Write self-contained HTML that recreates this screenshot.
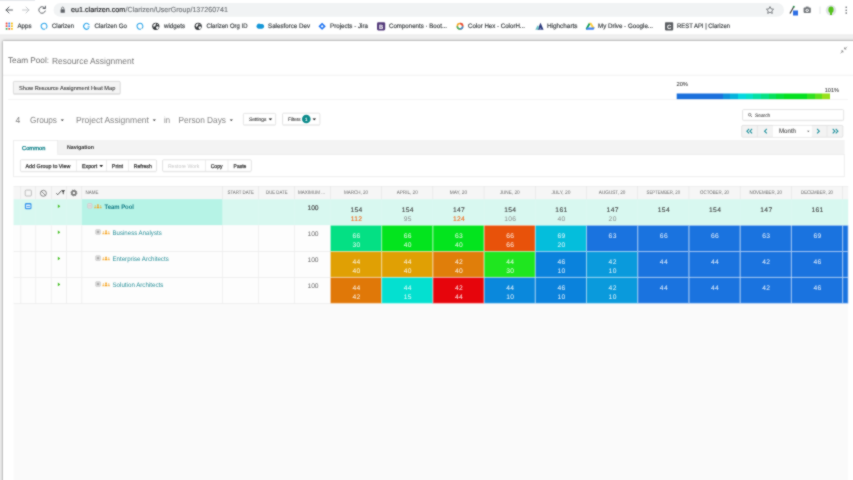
<!DOCTYPE html>
<html><head><meta charset="utf-8"><title>Team Pool: Resource Assignment</title>
<style>
html,body{margin:0;padding:0;width:853px;height:480px;overflow:hidden;background:#fff}
body{position:relative;filter:url(#soft);font-family:"Liberation Sans",sans-serif;text-rendering:geometricPrecision}
.b{position:absolute;display:block}
.tx{will-change:transform;font-family:"Liberation Sans",sans-serif;text-rendering:geometricPrecision}
.tx text{white-space:pre}
</style></head><body>
<svg width="0" height="0" style="position:absolute"><defs><filter id="soft" x="0" y="0" width="100%" height="100%" color-interpolation-filters="sRGB"><feConvolveMatrix order="3" kernelMatrix="1 2 1 2 12 2 1 2 1" divisor="24" edgeMode="duplicate" preserveAlpha="true"/></filter></defs></svg>
<div class="b" style="left:0px;top:0px;width:853px;height:35px;background:#fff"></div>
<div class="b" style="left:0px;top:35px;width:853px;height:445px;background:#efefef"></div>
<div class="b" style="left:3px;top:41px;width:857px;height:449px;background:#fff;box-shadow:0 0 1.2px rgba(0,0,0,.25),0 0 3px rgba(0,0,0,.38)"></div>
<svg class="b" style="left:0;top:0" width="853" height="480" viewBox="0 0 853 480">
<rect x="0.00" y="0.00" width="35.00" height="1.00" fill="#e6e8ec"/>
<rect x="53.50" y="3.00" width="730.50" height="13.80" fill="#f1f3f4" rx="7.00"/>
<svg x="0" y="0" width="853" height="40" viewBox="0 0 853 40"><g fill="none" stroke="#5f6368" stroke-width="1" stroke-linecap="round" stroke-linejoin="round"><path d="M12.5 10H6M9 7L6 10l3 3"/><path d="M22.5 10H29M26 7l3 3-3 3" stroke="#c4c7ca"/><path d="M45 8.3A3.3 3.3 0 1 0 45.3 11"/><path d="M45.4 6.2v2.3h-2.3" /></g><rect x="60.6" y="9.3" width="4.2" height="3.5" rx=".5" fill="#5f6368"/><path d="M61.6 9.3V8.2a1.1 1.1 0 0 1 2.2 0v1.1" fill="none" stroke="#5f6368" stroke-width=".8"/><path d="M770 6.6l1.1 2.3 2.5.3-1.8 1.7.5 2.5-2.3-1.2-2.3 1.2.5-2.5-1.8-1.7 2.5-.3z" fill="none" stroke="#5f6368" stroke-width=".8" stroke-linejoin="round"/><path d="M790 13.5l3.6-6.5" stroke="#444" stroke-width="1.3"/><rect x="793" y="10.5" width="5" height="5" fill="#2f6fe4"/><circle cx="793.8" cy="6.8" r="1" fill="#2a8f4a"/><rect x="803.6" y="7.6" width="7.2" height="5.4" rx="1" fill="#74787c"/><rect x="805.8" y="6.6" width="2.8" height="1.4" fill="#74787c"/><circle cx="807.2" cy="10.3" r="1.6" fill="#fff"/><circle cx="807.2" cy="10.3" r=".8" fill="#74787c"/><path d="M820 6.5v7.5" stroke="#dadce0" stroke-width=".7"/><circle cx="831" cy="10.3" r="5.2" fill="#dfe3e6"/><ellipse cx="831" cy="9.8" rx="2.6" ry="3.3" fill="#55c21c"/><rect x="830" y="12" width="2" height="3" fill="#55c21c"/><circle cx="846.2" cy="7.3" r=".8" fill="#5f6368"/><circle cx="846.2" cy="10.2" r=".8" fill="#5f6368"/><circle cx="846.2" cy="13.1" r=".8" fill="#5f6368"/><g><rect x="5.70" y="22.60" width="1.8" height="1.8" rx=".4" fill="#ea4335"/><rect x="8.35" y="22.60" width="1.8" height="1.8" rx=".4" fill="#4285f4"/><rect x="11.00" y="22.60" width="1.8" height="1.8" rx=".4" fill="#fbbc05"/><rect x="5.70" y="25.25" width="1.8" height="1.8" rx=".4" fill="#ea4335"/><rect x="8.35" y="25.25" width="1.8" height="1.8" rx=".4" fill="#4285f4"/><rect x="11.00" y="25.25" width="1.8" height="1.8" rx=".4" fill="#fbbc05"/><rect x="5.70" y="27.90" width="1.8" height="1.8" rx=".4" fill="#34a853"/><rect x="8.35" y="27.90" width="1.8" height="1.8" rx=".4" fill="#ea4335"/><rect x="11.00" y="27.90" width="1.8" height="1.8" rx=".4" fill="#fbbc05"/></g><circle cx="44.1" cy="26.3" r="2.9" fill="none" stroke="#2ea6ea" stroke-width="1.05" stroke-dasharray="16.4 1.82" transform="rotate(70 44.1 26.3)"/><circle cx="45.9" cy="28.4" r=".5" fill="#9aa"/><circle cx="86.6" cy="26.3" r="2.9" fill="none" stroke="#2ea6ea" stroke-width="1.05" stroke-dasharray="14.6 3.62" transform="rotate(40 86.6 26.3)"/><path d="M87.6 26.9h2.2" stroke="#2ea6ea" stroke-width="1"/><circle cx="140" cy="26.3" r="2.9" fill="none" stroke="#2ea6ea" stroke-width="1.05" stroke-dasharray="16.4 1.82" transform="rotate(70 140 26.3)"/><circle cx="141.8" cy="28.4" r=".5" fill="#9aa"/><circle cx="155.8" cy="26.3" r="3.6" fill="#35383b"/><path d="M153.20000000000002 25.1q1.2-1.6 2.6-1.9l.5 1-1 .8.3 1.1-1.3.4-.4 1.2z" fill="#fff"/><path d="M156.20000000000002 26.7l1.5-.5 1.1.9-.6 1.6-1.2.6-.9-1.2z" fill="#fff"/><path d="M157.0 23.7l1.2.9-.9.7z" fill="#fff"/><circle cx="198.2" cy="26.3" r="3.6" fill="#35383b"/><path d="M195.6 25.1q1.2-1.6 2.6-1.9l.5 1-1 .8.3 1.1-1.3.4-.4 1.2z" fill="#fff"/><path d="M198.6 26.7l1.5-.5 1.1.9-.6 1.6-1.2.6-.9-1.2z" fill="#fff"/><path d="M199.39999999999998 23.7l1.2.9-.9.7z" fill="#fff"/><ellipse cx="260.3" cy="26.4" rx="3.8" ry="2.3" fill="#1798d8"/><circle cx="259" cy="25.2" r="1.8" fill="#1798d8"/><circle cx="261.8" cy="25.6" r="1.6" fill="#1798d8"/><rect x="319.5" y="23.7" width="5.2" height="5.2" rx=".5" fill="#2477f2" transform="rotate(45 322.1 26.3)"/><rect x="321.1" y="25.3" width="2" height="2" fill="#fff" transform="rotate(45 322.1 26.3)"/><rect x="377" y="22.2" width="8.2" height="8.2" rx="1.4" fill="#563d7c"/><circle cx="460" cy="26.2" r="2.7" fill="none" stroke="#f5a623" stroke-width="1.5"/><path d="M460 23.5a2.7 2.7 0 0 1 2.7 2.7" fill="none" stroke="#e8453c" stroke-width="1.5"/><path d="M457.3 26.2a2.7 2.7 0 0 0 2.7 2.7" fill="none" stroke="#3bb273" stroke-width="1.5"/><path d="M460 28.9a2.7 2.7 0 0 0 2.7-2.7" fill="none" stroke="#3a86d8" stroke-width="1.5"/><path d="M537.4 29.8l3.1-7 3.1 7z" fill="#2b3a7c"/><path d="M535.3 29.8l2.3-4.6 1.6 2.2-1.2 2.4z" fill="#6fc3c8"/><path d="M539.3 29.8l1.2-2.6 1.2 2.600z" fill="#8a94c8"/><path d="M589 22.700l-3.300 5.700 1.200 1.500 3.500-6z" fill="#0f9d58"/><path d="M589 22.700h2.300l3.400 5.600h-2.400z" fill="#ffcd40"/><path d="M587.300 27.400l-1.400 2.300h7.600l1.300-2.300z" fill="#4285f4"/><rect x="665" y="22.2" width="8.2" height="8.2" rx=".8" fill="#5c5f63"/></svg>
<rect x="0.00" y="34.50" width="853.00" height="0.60" fill="#e6e6e6"/>
<svg x="839" y="45" width="10" height="10" viewBox="0 0 10 10"><g stroke="#777" stroke-width=".7" fill="none"><path d="M1.6 8.2l2.2-2.2M3.9 7.6V5.9H2.2"/><path d="M7.9 1.8L5.7 4M5.6 2.4v1.7h1.7"/></g></svg>
<rect x="3.00" y="74.80" width="850.00" height="0.70" fill="#ececec"/>
<rect x="13.00" y="81.70" width="107.50" height="13.00" rx="1.50" fill="rgba(0,0,0,.12)"/>
<rect x="13.00" y="81.00" width="107.50" height="13.00" fill="#f4f4f4" rx="1.50"/>
<rect x="13.35" y="81.35" width="106.80" height="12.30" rx="1.15" fill="none" stroke="#d2d2d2" stroke-width="0.7"/>
<defs><linearGradient id="lg" x1="0" x2="1" y1="0" y2="0"><stop offset="0.000" stop-color="#1b70dc"/><stop offset="0.050" stop-color="#1b70dc"/><stop offset="0.050" stop-color="#1b70dc"/><stop offset="0.100" stop-color="#1b70dc"/><stop offset="0.100" stop-color="#1b70dc"/><stop offset="0.150" stop-color="#1b70dc"/><stop offset="0.150" stop-color="#1b70dc"/><stop offset="0.200" stop-color="#1b70dc"/><stop offset="0.200" stop-color="#1b70dc"/><stop offset="0.250" stop-color="#1b70dc"/><stop offset="0.250" stop-color="#1b70dc"/><stop offset="0.300" stop-color="#1b70dc"/><stop offset="0.300" stop-color="#0e92dc"/><stop offset="0.350" stop-color="#0e92dc"/><stop offset="0.350" stop-color="#05b2dc"/><stop offset="0.400" stop-color="#05b2dc"/><stop offset="0.400" stop-color="#04d8e0"/><stop offset="0.450" stop-color="#04d8e0"/><stop offset="0.450" stop-color="#04e0c8"/><stop offset="0.500" stop-color="#04e0c8"/><stop offset="0.500" stop-color="#04e0a4"/><stop offset="0.550" stop-color="#04e0a4"/><stop offset="0.550" stop-color="#04e084"/><stop offset="0.600" stop-color="#04e084"/><stop offset="0.600" stop-color="#04e05c"/><stop offset="0.650" stop-color="#04e05c"/><stop offset="0.650" stop-color="#04e03a"/><stop offset="0.700" stop-color="#04e03a"/><stop offset="0.700" stop-color="#04e020"/><stop offset="0.750" stop-color="#04e020"/><stop offset="0.750" stop-color="#04e020"/><stop offset="0.800" stop-color="#04e020"/><stop offset="0.800" stop-color="#04e020"/><stop offset="0.850" stop-color="#04e020"/><stop offset="0.850" stop-color="#30e020"/><stop offset="0.900" stop-color="#30e020"/><stop offset="0.900" stop-color="#60e01c"/><stop offset="0.950" stop-color="#60e01c"/><stop offset="0.950" stop-color="#98e01c"/><stop offset="1.000" stop-color="#98e01c"/></linearGradient></defs><rect x="676.7" y="93.5" width="153.30" height="6" fill="url(#lg)"/>
<rect x="8.00" y="99.20" width="840.00" height="0.70" fill="#efefef"/>
<svg x="60.50" y="119.25" width="3.6" height="2.1" viewBox="0 0 10 6"><path d="M0 0h10L5 6z" fill="#4a4a4a"/></svg>
<svg x="152.50" y="119.25" width="3.6" height="2.1" viewBox="0 0 10 6"><path d="M0 0h10L5 6z" fill="#4a4a4a"/></svg>
<svg x="229.50" y="119.25" width="3.6" height="2.1" viewBox="0 0 10 6"><path d="M0 0h10L5 6z" fill="#4a4a4a"/></svg>
<rect x="243.00" y="113.70" width="33.00" height="12.20" rx="1.50" fill="rgba(0,0,0,.05)"/>
<rect x="243.00" y="113.00" width="33.00" height="12.20" fill="#fff" rx="1.50"/>
<rect x="243.35" y="113.35" width="32.30" height="11.50" rx="1.15" fill="none" stroke="#dadada" stroke-width="0.7"/>
<svg x="268.35" y="118.15" width="4.1" height="2.3" viewBox="0 0 10 6"><path d="M0 0h10L5 6z" fill="#262626"/></svg>
<rect x="282.20" y="113.50" width="38.00" height="12.40" rx="1.50" fill="rgba(0,0,0,.05)"/>
<rect x="282.20" y="112.80" width="38.00" height="12.40" fill="#fff" rx="1.50"/>
<rect x="282.55" y="113.15" width="37.30" height="11.70" rx="1.15" fill="none" stroke="#dadada" stroke-width="0.7"/>
<rect x="302.00" y="114.70" width="8.60" height="8.60" fill="#0e8c8c" rx="4.30"/>
<svg x="312.25" y="118.15" width="4.1" height="2.3" viewBox="0 0 10 6"><path d="M0 0h10L5 6z" fill="#262626"/></svg>
<rect x="742.20" y="109.90" width="101.80" height="11.40" rx="1.50" fill="rgba(0,0,0,.05)"/>
<rect x="742.20" y="109.20" width="101.80" height="11.40" fill="#fff" rx="1.50"/>
<rect x="742.55" y="109.55" width="101.10" height="10.70" rx="1.15" fill="none" stroke="#dadada" stroke-width="0.7"/>
<svg x="747.8" y="112.8" width="4.6" height="4.6" viewBox="0 0 10 10"><circle cx="4" cy="4" r="2.8" fill="none" stroke="#555" stroke-width="1.5"/><path d="M6.2 6.2L9 9" stroke="#555" stroke-width="1.6"/></svg>
<rect x="741.40" y="125.10" width="101.80" height="12.40" fill="#f3f3f3" rx="1.50"/>
<rect x="741.75" y="125.45" width="101.10" height="11.70" rx="1.15" fill="none" stroke="#dcdcdc" stroke-width="0.7"/>
<rect x="756.90" y="125.50" width="0.60" height="11.60" fill="#e0e0e0"/>
<rect x="826.70" y="125.50" width="0.60" height="11.60" fill="#e0e0e0"/>
<rect x="773.00" y="125.70" width="38.80" height="11.20" fill="#fff"/>
<svg x="806.80" y="130.55" width="3" height="1.7" viewBox="0 0 10 6"><path d="M0 0h10L5 6z" fill="#666"/></svg>
<path d="M749.10 128.95l-2.20 2.25 2.20 2.25M752.10 128.95l-2.20 2.25 2.20 2.25" fill="none" stroke="#22929e" stroke-width="1.1"/>
<path d="M766.80 128.95l-2.20 2.25 2.20 2.25" fill="none" stroke="#22929e" stroke-width="1.1"/>
<path d="M817.10 128.95l2.20 2.25 -2.20 2.25" fill="none" stroke="#22929e" stroke-width="1.1"/>
<path d="M835.70 128.95l2.20 2.25 -2.20 2.25M832.70 128.95l2.20 2.25 -2.20 2.25" fill="none" stroke="#22929e" stroke-width="1.1"/>
<rect x="13.20" y="140.00" width="831.40" height="14.20" fill="#f3f3f3"/>
<rect x="13.30" y="140.00" width="44.70" height="15.00" fill="#fff"/>
<rect x="13.65" y="140.35" width="44.00" height="14.30" rx="0.00" fill="none" stroke="#e8e8e8" stroke-width="0.7"/>
<rect x="13.30" y="154.20" width="831.30" height="22.90" fill="#fff"/>
<rect x="13.65" y="154.55" width="830.60" height="22.20" rx="0.00" fill="none" stroke="#e8e8e8" stroke-width="0.7"/>
<rect x="14.00" y="153.50" width="43.30" height="1.90" fill="#fff"/>
<rect x="20.00" y="160.10" width="136.90" height="12.30" rx="1.50" fill="rgba(0,0,0,.05)"/>
<rect x="20.00" y="159.40" width="136.90" height="12.30" fill="#fff" rx="1.50"/>
<rect x="20.35" y="159.75" width="136.20" height="11.60" rx="1.15" fill="none" stroke="#dadada" stroke-width="0.7"/>
<rect x="76.30" y="159.80" width="0.60" height="11.50" fill="#e2e2e2"/>
<rect x="106.40" y="159.80" width="0.60" height="11.50" fill="#e2e2e2"/>
<rect x="128.30" y="159.80" width="0.60" height="11.50" fill="#e2e2e2"/>
<svg x="99.15" y="164.95" width="4.1" height="2.3" viewBox="0 0 10 6"><path d="M0 0h10L5 6z" fill="#222"/></svg>
<rect x="162.20" y="160.10" width="89.50" height="12.30" rx="1.50" fill="rgba(0,0,0,.05)"/>
<rect x="162.20" y="159.40" width="89.50" height="12.30" fill="#fff" rx="1.50"/>
<rect x="162.55" y="159.75" width="88.80" height="11.60" rx="1.15" fill="none" stroke="#dadada" stroke-width="0.7"/>
<rect x="205.20" y="159.80" width="0.60" height="11.50" fill="#e2e2e2"/>
<rect x="227.70" y="159.80" width="0.60" height="11.50" fill="#e2e2e2"/>
<rect x="13.60" y="186.00" width="834.60" height="294.00" fill="#fafafa"/>
<rect x="13.60" y="186.00" width="834.60" height="13.20" fill="#f6f6f6"/>
<rect x="13.60" y="186.00" width="834.60" height="0.6" fill="#ececec"/>
<rect x="13.60" y="199.20" width="834.60" height="26.10" fill="#d8f8f0"/>
<rect x="81.80" y="199.20" width="140.60" height="26.10" fill="#b6f3e6"/>
<rect x="13.60" y="225.30" width="316.80" height="26.20" fill="#fdfdfd"/>
<rect x="13.60" y="251.50" width="316.80" height="25.90" fill="#fdfdfd"/>
<rect x="13.60" y="277.40" width="316.80" height="26.00" fill="#fdfdfd"/>
<rect x="20.50" y="186.00" width="0.60" height="13.20" fill="#e4e4e4"/>
<rect x="20.50" y="199.20" width="0.60" height="26.10" fill="rgba(255,255,255,.16)"/>
<rect x="35.40" y="186.00" width="0.60" height="13.20" fill="#e4e4e4"/>
<rect x="35.40" y="199.20" width="0.60" height="26.10" fill="rgba(255,255,255,.16)"/>
<rect x="51.00" y="186.00" width="0.60" height="13.20" fill="#e4e4e4"/>
<rect x="51.00" y="199.20" width="0.60" height="26.10" fill="rgba(255,255,255,.16)"/>
<rect x="66.20" y="186.00" width="0.60" height="13.20" fill="#e4e4e4"/>
<rect x="66.20" y="199.20" width="0.60" height="26.10" fill="rgba(255,255,255,.16)"/>
<rect x="81.50" y="186.00" width="0.60" height="13.20" fill="#e4e4e4"/>
<rect x="81.50" y="199.20" width="0.60" height="26.10" fill="rgba(255,255,255,.16)"/>
<rect x="222.10" y="186.00" width="0.60" height="13.20" fill="#e4e4e4"/>
<rect x="222.10" y="199.20" width="0.60" height="26.10" fill="rgba(255,255,255,.16)"/>
<rect x="258.10" y="186.00" width="0.60" height="13.20" fill="#e4e4e4"/>
<rect x="258.10" y="199.20" width="0.60" height="26.10" fill="rgba(255,255,255,.16)"/>
<rect x="294.10" y="186.00" width="0.60" height="13.20" fill="#e4e4e4"/>
<rect x="294.10" y="199.20" width="0.60" height="26.10" fill="rgba(255,255,255,.16)"/>
<rect x="330.10" y="186.00" width="0.60" height="13.20" fill="#e4e4e4"/>
<rect x="330.10" y="199.20" width="0.60" height="26.10" fill="rgba(255,255,255,.16)"/>
<rect x="381.32" y="186.00" width="0.60" height="13.20" fill="#e4e4e4"/>
<rect x="381.32" y="199.20" width="0.60" height="26.10" fill="rgba(255,255,255,.16)"/>
<rect x="432.54" y="186.00" width="0.60" height="13.20" fill="#e4e4e4"/>
<rect x="432.54" y="199.20" width="0.60" height="26.10" fill="rgba(255,255,255,.16)"/>
<rect x="483.76" y="186.00" width="0.60" height="13.20" fill="#e4e4e4"/>
<rect x="483.76" y="199.20" width="0.60" height="26.10" fill="rgba(255,255,255,.16)"/>
<rect x="534.98" y="186.00" width="0.60" height="13.20" fill="#e4e4e4"/>
<rect x="534.98" y="199.20" width="0.60" height="26.10" fill="rgba(255,255,255,.16)"/>
<rect x="586.20" y="186.00" width="0.60" height="13.20" fill="#e4e4e4"/>
<rect x="586.20" y="199.20" width="0.60" height="26.10" fill="rgba(255,255,255,.16)"/>
<rect x="637.42" y="186.00" width="0.60" height="13.20" fill="#e4e4e4"/>
<rect x="637.42" y="199.20" width="0.60" height="26.10" fill="rgba(255,255,255,.16)"/>
<rect x="688.64" y="186.00" width="0.60" height="13.20" fill="#e4e4e4"/>
<rect x="688.64" y="199.20" width="0.60" height="26.10" fill="rgba(255,255,255,.16)"/>
<rect x="739.86" y="186.00" width="0.60" height="13.20" fill="#e4e4e4"/>
<rect x="739.86" y="199.20" width="0.60" height="26.10" fill="rgba(255,255,255,.16)"/>
<rect x="791.08" y="186.00" width="0.60" height="13.20" fill="#e4e4e4"/>
<rect x="791.08" y="199.20" width="0.60" height="26.10" fill="rgba(255,255,255,.16)"/>
<rect x="842.30" y="186.00" width="0.60" height="13.20" fill="#e4e4e4"/>
<rect x="842.30" y="199.20" width="0.60" height="26.10" fill="rgba(255,255,255,.16)"/>
<rect x="20.35" y="225.30" width="0.90" height="78.10" fill="#efefef"/>
<rect x="35.25" y="225.30" width="0.90" height="78.10" fill="#efefef"/>
<rect x="50.85" y="225.30" width="0.90" height="78.10" fill="#efefef"/>
<rect x="66.05" y="225.30" width="0.90" height="78.10" fill="#efefef"/>
<rect x="81.35" y="225.30" width="0.90" height="78.10" fill="#efefef"/>
<rect x="221.95" y="225.30" width="0.90" height="78.10" fill="#efefef"/>
<rect x="257.95" y="225.30" width="0.90" height="78.10" fill="#efefef"/>
<rect x="293.95" y="225.30" width="0.90" height="78.10" fill="#efefef"/>
<rect x="329.95" y="225.30" width="0.90" height="78.10" fill="#efefef"/>
<rect x="13.60" y="251.05" width="316.80" height="0.90" fill="#eeeeee"/>
<rect x="13.60" y="276.95" width="316.80" height="0.90" fill="#eeeeee"/>
<rect x="13.60" y="302.95" width="316.80" height="0.90" fill="#eeeeee"/>
<svg x="13" y="185" width="70" height="15" viewBox="13 185 70 15"><rect x="25.2" y="190.1" width="6.2" height="5.9" rx="1" fill="#f6f6f6" stroke="#a6a6a6" stroke-width=".7"/><circle cx="43.4" cy="193.3" r="3" fill="none" stroke="#6e6e6e" stroke-width=".8"/><path d="M41.3 191.2l4.2 4.2" stroke="#6e6e6e" stroke-width=".8"/><path d="M56.3 193.4l1.5 1.3 3.6-4" fill="none" stroke="#444" stroke-width=".85"/><path d="M61.2 190.3h4l-1.55 1.8v2.3l-.9-.6v-1.7z" fill="#333"/><circle cx="73.9" cy="192.9" r="2.05" fill="none" stroke="#7c7c7c" stroke-width="1.7"/><circle cx="73.9" cy="192.9" r="3" fill="none" stroke="#7c7c7c" stroke-width=".9" stroke-dasharray="1.1 1.256"/></svg>
<rect x="87.40" y="203.30" width="4.80" height="5.10" fill="#e2e2e2" rx="0.80"/>
<rect x="87.70" y="203.60" width="4.20" height="4.50" rx="0.50" fill="none" stroke="#c2c2c2" stroke-width="0.6"/>
<svg x="0" y="0" overflow="visible" width="1" height="1" viewBox="0 0 1 1"><path d="M88.60 205.85h2.4" stroke="#b4b4b4" stroke-width=".5"/></svg>
<svg x="94.00" y="204.10" width="7.9" height="4.3" viewBox="0 0 18 10"><g fill="#f6a21c"><circle cx="9" cy="2.3" r="2.1"/><path d="M5.6 10c0-3.6 1.3-5.2 3.4-5.2s3.400 1.600 3.400 5.200z"/><g opacity=".8"><circle cx="2.700" cy="3.900" r="1.450"/><path d="M0 10c0-2.800.900-4.100 2.700-4.100.900 0 1.500.300 1.900.900-.500 1-.600 2-.600 3.200z"/><circle cx="15.300" cy="3.900" r="1.450"/><path d="M18 10c0-2.800-.900-4.100-2.700-4.100-.900 0-1.500.300-1.900.900.500 1 .600 2 .600 3.200z"/></g></g></svg>
<svg x="57.6" y="204.00" width="2.8" height="4.4" viewBox="0 0 3 4.4"><path d="M0 0l3 2.2-3 2.2z" fill="#48c028"/></svg>
<rect x="95.50" y="229.40" width="5.10" height="5.10" fill="#e2e2e2" rx="0.80"/>
<rect x="95.80" y="229.70" width="4.50" height="4.50" rx="0.50" fill="none" stroke="#c2c2c2" stroke-width="0.6"/>
<svg x="0" y="0" overflow="visible" width="1" height="1" viewBox="0 0 1 1"><path d="M96.75 231.95h2.6M98.05 230.65v2.6" stroke="#808080" stroke-width=".6"/></svg>
<svg x="102.10" y="230.10" width="7.9" height="4.3" viewBox="0 0 18 10"><g fill="#f6a21c"><circle cx="9" cy="2.3" r="2.1"/><path d="M5.6 10c0-3.6 1.3-5.2 3.4-5.2s3.400 1.600 3.400 5.200z"/><g opacity=".8"><circle cx="2.700" cy="3.900" r="1.450"/><path d="M0 10c0-2.800.900-4.100 2.700-4.100.900 0 1.500.300 1.900.900-.500 1-.600 2-.600 3.200z"/><circle cx="15.300" cy="3.900" r="1.450"/><path d="M18 10c0-2.800-.900-4.100-2.700-4.100-.900 0-1.500.300-1.900.900.500 1 .600 2 .600 3.200z"/></g></g></svg>
<svg x="57.6" y="230.10" width="2.8" height="4.4" viewBox="0 0 3 4.4"><path d="M0 0l3 2.2-3 2.2z" fill="#48c028"/></svg>
<rect x="95.50" y="255.60" width="5.10" height="5.10" fill="#e2e2e2" rx="0.80"/>
<rect x="95.80" y="255.90" width="4.50" height="4.50" rx="0.50" fill="none" stroke="#c2c2c2" stroke-width="0.6"/>
<svg x="0" y="0" overflow="visible" width="1" height="1" viewBox="0 0 1 1"><path d="M96.75 258.15h2.6M98.05 256.85v2.6" stroke="#808080" stroke-width=".6"/></svg>
<svg x="102.10" y="256.30" width="7.9" height="4.3" viewBox="0 0 18 10"><g fill="#f6a21c"><circle cx="9" cy="2.3" r="2.1"/><path d="M5.6 10c0-3.6 1.3-5.2 3.4-5.2s3.400 1.600 3.400 5.200z"/><g opacity=".8"><circle cx="2.700" cy="3.900" r="1.450"/><path d="M0 10c0-2.800.900-4.100 2.700-4.100.900 0 1.500.300 1.900.900-.500 1-.600 2-.600 3.200z"/><circle cx="15.300" cy="3.900" r="1.450"/><path d="M18 10c0-2.800-.900-4.100-2.700-4.100-.900 0-1.500.300-1.900.900.500 1 .600 2 .600 3.200z"/></g></g></svg>
<svg x="57.6" y="256.30" width="2.8" height="4.4" viewBox="0 0 3 4.4"><path d="M0 0l3 2.2-3 2.2z" fill="#48c028"/></svg>
<rect x="95.50" y="281.50" width="5.10" height="5.10" fill="#e2e2e2" rx="0.80"/>
<rect x="95.80" y="281.80" width="4.50" height="4.50" rx="0.50" fill="none" stroke="#c2c2c2" stroke-width="0.6"/>
<svg x="0" y="0" overflow="visible" width="1" height="1" viewBox="0 0 1 1"><path d="M96.75 284.05h2.6M98.05 282.75v2.6" stroke="#808080" stroke-width=".6"/></svg>
<svg x="102.10" y="282.20" width="7.9" height="4.3" viewBox="0 0 18 10"><g fill="#f6a21c"><circle cx="9" cy="2.3" r="2.1"/><path d="M5.6 10c0-3.6 1.3-5.2 3.4-5.2s3.400 1.600 3.400 5.200z"/><g opacity=".8"><circle cx="2.700" cy="3.900" r="1.450"/><path d="M0 10c0-2.800.900-4.100 2.700-4.100.900 0 1.500.300 1.900.900-.500 1-.600 2-.600 3.200z"/><circle cx="15.300" cy="3.900" r="1.450"/><path d="M18 10c0-2.800-.900-4.100-2.700-4.100-.900 0-1.500.300-1.900.900.500 1 .600 2 .600 3.200z"/></g></g></svg>
<svg x="57.6" y="282.20" width="2.8" height="4.4" viewBox="0 0 3 4.4"><path d="M0 0l3 2.2-3 2.2z" fill="#48c028"/></svg>
<rect x="24.90" y="203.10" width="6.60" height="6.20" fill="#3a98ea" rx="1.30"/>
<rect x="26.00" y="204.50" width="4.40" height="3.60" fill="#e6f3ff" rx="0.50"/>
<rect x="26.60" y="206.10" width="3.20" height="0.90" fill="#3a98ea"/>
<rect x="330.40" y="225.30" width="51.22" height="26.20" fill="#04e084"/>
<rect x="330.67" y="225.58" width="50.67" height="25.65" rx="0.00" fill="none" stroke="rgba(255,255,255,.62)" stroke-width="0.55"/>
<rect x="381.62" y="225.30" width="51.22" height="26.20" fill="#03e41e"/>
<rect x="381.89" y="225.58" width="50.67" height="25.65" rx="0.00" fill="none" stroke="rgba(255,255,255,.62)" stroke-width="0.55"/>
<rect x="432.84" y="225.30" width="51.22" height="26.20" fill="#03e41e"/>
<rect x="433.11" y="225.58" width="50.67" height="25.65" rx="0.00" fill="none" stroke="rgba(255,255,255,.62)" stroke-width="0.55"/>
<rect x="484.06" y="225.30" width="51.22" height="26.20" fill="#e8520a"/>
<rect x="484.33" y="225.58" width="50.67" height="25.65" rx="0.00" fill="none" stroke="rgba(255,255,255,.62)" stroke-width="0.55"/>
<rect x="535.28" y="225.30" width="51.22" height="26.20" fill="#04bedc"/>
<rect x="535.55" y="225.58" width="50.67" height="25.65" rx="0.00" fill="none" stroke="rgba(255,255,255,.62)" stroke-width="0.55"/>
<rect x="586.50" y="225.30" width="51.22" height="26.20" fill="#1a73df"/>
<rect x="586.77" y="225.58" width="50.67" height="25.65" rx="0.00" fill="none" stroke="rgba(255,255,255,.62)" stroke-width="0.55"/>
<rect x="637.72" y="225.30" width="51.22" height="26.20" fill="#1a73df"/>
<rect x="638.00" y="225.58" width="50.67" height="25.65" rx="0.00" fill="none" stroke="rgba(255,255,255,.62)" stroke-width="0.55"/>
<rect x="688.94" y="225.30" width="51.22" height="26.20" fill="#1a73df"/>
<rect x="689.21" y="225.58" width="50.67" height="25.65" rx="0.00" fill="none" stroke="rgba(255,255,255,.62)" stroke-width="0.55"/>
<rect x="740.16" y="225.30" width="51.22" height="26.20" fill="#1a73df"/>
<rect x="740.43" y="225.58" width="50.67" height="25.65" rx="0.00" fill="none" stroke="rgba(255,255,255,.62)" stroke-width="0.55"/>
<rect x="791.38" y="225.30" width="51.22" height="26.20" fill="#1a73df"/>
<rect x="791.65" y="225.58" width="50.67" height="25.65" rx="0.00" fill="none" stroke="rgba(255,255,255,.62)" stroke-width="0.55"/>
<rect x="842.60" y="225.30" width="5.60" height="26.20" fill="#1a73df"/>
<rect x="842.88" y="225.58" width="5.05" height="25.65" rx="0.00" fill="none" stroke="rgba(255,255,255,.62)" stroke-width="0.55"/>
<rect x="330.40" y="251.50" width="51.22" height="25.90" fill="#e0a004"/>
<rect x="330.67" y="251.78" width="50.67" height="25.35" rx="0.00" fill="none" stroke="rgba(255,255,255,.62)" stroke-width="0.55"/>
<rect x="381.62" y="251.50" width="51.22" height="25.90" fill="#e0a004"/>
<rect x="381.89" y="251.78" width="50.67" height="25.35" rx="0.00" fill="none" stroke="rgba(255,255,255,.62)" stroke-width="0.55"/>
<rect x="432.84" y="251.50" width="51.22" height="25.90" fill="#e07e0a"/>
<rect x="433.11" y="251.78" width="50.67" height="25.35" rx="0.00" fill="none" stroke="rgba(255,255,255,.62)" stroke-width="0.55"/>
<rect x="484.06" y="251.50" width="51.22" height="25.90" fill="#1fe61f"/>
<rect x="484.33" y="251.78" width="50.67" height="25.35" rx="0.00" fill="none" stroke="rgba(255,255,255,.62)" stroke-width="0.55"/>
<rect x="535.28" y="251.50" width="51.22" height="25.90" fill="#0a82dc"/>
<rect x="535.55" y="251.78" width="50.67" height="25.35" rx="0.00" fill="none" stroke="rgba(255,255,255,.62)" stroke-width="0.55"/>
<rect x="586.50" y="251.50" width="51.22" height="25.90" fill="#0a9adc"/>
<rect x="586.77" y="251.78" width="50.67" height="25.35" rx="0.00" fill="none" stroke="rgba(255,255,255,.62)" stroke-width="0.55"/>
<rect x="637.72" y="251.50" width="51.22" height="25.90" fill="#1a73df"/>
<rect x="638.00" y="251.78" width="50.67" height="25.35" rx="0.00" fill="none" stroke="rgba(255,255,255,.62)" stroke-width="0.55"/>
<rect x="688.94" y="251.50" width="51.22" height="25.90" fill="#1a73df"/>
<rect x="689.21" y="251.78" width="50.67" height="25.35" rx="0.00" fill="none" stroke="rgba(255,255,255,.62)" stroke-width="0.55"/>
<rect x="740.16" y="251.50" width="51.22" height="25.90" fill="#1a73df"/>
<rect x="740.43" y="251.78" width="50.67" height="25.35" rx="0.00" fill="none" stroke="rgba(255,255,255,.62)" stroke-width="0.55"/>
<rect x="791.38" y="251.50" width="51.22" height="25.90" fill="#1a73df"/>
<rect x="791.65" y="251.78" width="50.67" height="25.35" rx="0.00" fill="none" stroke="rgba(255,255,255,.62)" stroke-width="0.55"/>
<rect x="842.60" y="251.50" width="5.60" height="25.90" fill="#1a73df"/>
<rect x="842.88" y="251.78" width="5.05" height="25.35" rx="0.00" fill="none" stroke="rgba(255,255,255,.62)" stroke-width="0.55"/>
<rect x="330.40" y="277.40" width="51.22" height="26.00" fill="#e07808"/>
<rect x="330.67" y="277.67" width="50.67" height="25.45" rx="0.00" fill="none" stroke="rgba(255,255,255,.62)" stroke-width="0.55"/>
<rect x="381.62" y="277.40" width="51.22" height="26.00" fill="#04e0d0"/>
<rect x="381.89" y="277.67" width="50.67" height="25.45" rx="0.00" fill="none" stroke="rgba(255,255,255,.62)" stroke-width="0.55"/>
<rect x="432.84" y="277.40" width="51.22" height="26.00" fill="#e6050c"/>
<rect x="433.11" y="277.67" width="50.67" height="25.45" rx="0.00" fill="none" stroke="rgba(255,255,255,.62)" stroke-width="0.55"/>
<rect x="484.06" y="277.40" width="51.22" height="26.00" fill="#0a88dc"/>
<rect x="484.33" y="277.67" width="50.67" height="25.45" rx="0.00" fill="none" stroke="rgba(255,255,255,.62)" stroke-width="0.55"/>
<rect x="535.28" y="277.40" width="51.22" height="26.00" fill="#0a82dc"/>
<rect x="535.55" y="277.67" width="50.67" height="25.45" rx="0.00" fill="none" stroke="rgba(255,255,255,.62)" stroke-width="0.55"/>
<rect x="586.50" y="277.40" width="51.22" height="26.00" fill="#0a9adc"/>
<rect x="586.77" y="277.67" width="50.67" height="25.45" rx="0.00" fill="none" stroke="rgba(255,255,255,.62)" stroke-width="0.55"/>
<rect x="637.72" y="277.40" width="51.22" height="26.00" fill="#1a73df"/>
<rect x="638.00" y="277.67" width="50.67" height="25.45" rx="0.00" fill="none" stroke="rgba(255,255,255,.62)" stroke-width="0.55"/>
<rect x="688.94" y="277.40" width="51.22" height="26.00" fill="#1a73df"/>
<rect x="689.21" y="277.67" width="50.67" height="25.45" rx="0.00" fill="none" stroke="rgba(255,255,255,.62)" stroke-width="0.55"/>
<rect x="740.16" y="277.40" width="51.22" height="26.00" fill="#1a73df"/>
<rect x="740.43" y="277.67" width="50.67" height="25.45" rx="0.00" fill="none" stroke="rgba(255,255,255,.62)" stroke-width="0.55"/>
<rect x="791.38" y="277.40" width="51.22" height="26.00" fill="#1a73df"/>
<rect x="791.65" y="277.67" width="50.67" height="25.45" rx="0.00" fill="none" stroke="rgba(255,255,255,.62)" stroke-width="0.55"/>
<rect x="842.60" y="277.40" width="5.60" height="26.00" fill="#1a73df"/>
<rect x="842.88" y="277.67" width="5.05" height="25.45" rx="0.00" fill="none" stroke="rgba(255,255,255,.62)" stroke-width="0.55"/>
</svg>
<svg class="b tx" style="left:0;top:0" width="853" height="480" viewBox="0 0 853 480">
<text x="379.10" y="28.60" font-size="6.2" fill="#fff" textLength="4.20" lengthAdjust="spacingAndGlyphs" font-weight="bold">B</text>
<text x="666.90" y="28.60" font-size="6.2" fill="#fff" textLength="4.50" font-weight="bold">C</text>
<text x="71.00" y="12.40" font-size="7.3" fill="#202124" textLength="54.30" lengthAdjust="spacingAndGlyphs" stroke="#202124" stroke-width="0.15">eu1.clarizen.com</text>
<text x="125.60" y="12.40" font-size="7.3" fill="#6b6f73" textLength="102.40" lengthAdjust="spacingAndGlyphs" stroke="#6b6f73" stroke-width="0.1">/Clarizen/UserGroup/137260741</text>
<text x="17.50" y="28.00" font-size="6.5" fill="#3c4043" textLength="14.00" lengthAdjust="spacingAndGlyphs" stroke="#3c4043" stroke-width="0.18">Apps</text>
<text x="52.00" y="28.00" font-size="6.5" fill="#3c4043" textLength="22.00" lengthAdjust="spacingAndGlyphs" stroke="#3c4043" stroke-width="0.18">Clarizen</text>
<text x="94.50" y="28.00" font-size="6.5" fill="#3c4043" textLength="32.50" lengthAdjust="spacingAndGlyphs" stroke="#3c4043" stroke-width="0.18">Clarizen Go</text>
<text x="164.00" y="28.00" font-size="6.5" fill="#3c4043" textLength="21.00" lengthAdjust="spacingAndGlyphs" stroke="#3c4043" stroke-width="0.18">widgets</text>
<text x="206.50" y="28.00" font-size="6.5" fill="#3c4043" textLength="41.00" lengthAdjust="spacingAndGlyphs" stroke="#3c4043" stroke-width="0.18">Clarizen Org ID</text>
<text x="268.00" y="28.00" font-size="6.5" fill="#3c4043" textLength="42.00" lengthAdjust="spacingAndGlyphs" stroke="#3c4043" stroke-width="0.18">Salesforce Dev</text>
<text x="330.00" y="28.00" font-size="6.5" fill="#3c4043" textLength="38.00" lengthAdjust="spacingAndGlyphs" stroke="#3c4043" stroke-width="0.18">Projects - Jira</text>
<text x="389.00" y="28.00" font-size="6.5" fill="#3c4043" textLength="58.00" lengthAdjust="spacingAndGlyphs" stroke="#3c4043" stroke-width="0.18">Components · Boot...</text>
<text x="468.00" y="28.00" font-size="6.5" fill="#3c4043" textLength="57.00" lengthAdjust="spacingAndGlyphs" stroke="#3c4043" stroke-width="0.18">Color Hex - ColorH...</text>
<text x="547.00" y="28.00" font-size="6.5" fill="#3c4043" textLength="30.50" lengthAdjust="spacingAndGlyphs" stroke="#3c4043" stroke-width="0.18">Highcharts</text>
<text x="598.00" y="28.00" font-size="6.5" fill="#3c4043" textLength="55.00" lengthAdjust="spacingAndGlyphs" stroke="#3c4043" stroke-width="0.18">My Drive - Google...</text>
<text x="677.00" y="28.00" font-size="6.5" fill="#3c4043" textLength="53.00" lengthAdjust="spacingAndGlyphs" stroke="#3c4043" stroke-width="0.18">REST API | Clarizen</text>
<text x="8.00" y="63.00" font-size="8.25" fill="#6e6e6e" textLength="41.00">Team Pool:</text>
<text x="52.00" y="64.00" font-size="8.8" fill="#7a7a7a" textLength="82.00" lengthAdjust="spacingAndGlyphs">Resource Assignment</text>
<text x="19.00" y="90.00" font-size="5.7" fill="#444" textLength="96.30" lengthAdjust="spacingAndGlyphs" stroke="#444" stroke-width="0.12">Show Resource Assignment Heat Map</text>
<text x="676.50" y="86.00" font-size="5.8" fill="#3c3c3c" textLength="11.50" stroke="#3c3c3c" stroke-width="0.08">20%</text>
<text x="824.70" y="92.00" font-size="5.8" fill="#3c3c3c" textLength="14.30" lengthAdjust="spacingAndGlyphs" stroke="#3c3c3c" stroke-width="0.08">101%</text>
<text x="15.50" y="123.00" font-size="8.6" fill="#858585" textLength="5.00">4</text>
<text x="30.00" y="123.00" font-size="8.8" fill="#858585" textLength="27.00" lengthAdjust="spacingAndGlyphs">Groups</text>
<text x="76.00" y="123.00" font-size="8.8" fill="#858585" textLength="73.00" lengthAdjust="spacingAndGlyphs">Project Assignment</text>
<text x="164.00" y="123.00" font-size="8.8" fill="#858585" textLength="6.00" lengthAdjust="spacingAndGlyphs">in</text>
<text x="178.50" y="123.00" font-size="8.8" fill="#858585" textLength="47.50" lengthAdjust="spacingAndGlyphs">Person Days</text>
<text x="249.00" y="121.00" font-size="5.1" fill="#444" textLength="17.30" lengthAdjust="spacingAndGlyphs" stroke="#444" stroke-width="0.12">Settings</text>
<text x="288.00" y="121.00" font-size="5.1" fill="#444" textLength="12.60" lengthAdjust="spacingAndGlyphs" stroke="#444" stroke-width="0.12">Filters</text>
<text x="305.10" y="121.00" font-size="4.6" fill="#fff" textLength="2.40" lengthAdjust="spacingAndGlyphs" font-weight="bold">1</text>
<text x="755.00" y="117.00" font-size="5.0" fill="#555" textLength="15.30" lengthAdjust="spacingAndGlyphs" stroke="#555" stroke-width="0.1">Search</text>
<text x="779.00" y="133.00" font-size="6.4" fill="#555" textLength="17.00" lengthAdjust="spacingAndGlyphs" stroke="#555" stroke-width="0.12">Month</text>
<text x="22.00" y="150.00" font-size="5.7" fill="#14848c" textLength="23.30" stroke="#14848c" stroke-width="0.3">Common</text>
<text x="66.90" y="149.00" font-size="5.6" fill="#2e2e2e" textLength="27.10" lengthAdjust="spacingAndGlyphs" font-weight="bold">Navigation</text>
<text x="25.50" y="168.00" font-size="5.5" fill="#3a3a3a" textLength="44.90" lengthAdjust="spacingAndGlyphs" stroke="#3a3a3a" stroke-width="0.25">Add Group to View</text>
<text x="82.00" y="168.00" font-size="5.5" fill="#3a3a3a" textLength="15.20" lengthAdjust="spacingAndGlyphs" stroke="#3a3a3a" stroke-width="0.25">Export</text>
<text x="111.80" y="168.00" font-size="5.5" fill="#3a3a3a" textLength="11.30" stroke="#3a3a3a" stroke-width="0.25">Print</text>
<text x="133.80" y="168.00" font-size="5.5" fill="#3a3a3a" textLength="18.00" lengthAdjust="spacingAndGlyphs" stroke="#3a3a3a" stroke-width="0.25">Refresh</text>
<text x="167.90" y="168.00" font-size="5.5" fill="#c8c8c8" textLength="31.50" lengthAdjust="spacingAndGlyphs">Restore Work</text>
<text x="210.70" y="168.00" font-size="5.5" fill="#3a3a3a" textLength="11.80" lengthAdjust="spacingAndGlyphs" stroke="#3a3a3a" stroke-width="0.25">Copy</text>
<text x="233.60" y="168.00" font-size="5.5" fill="#3a3a3a" textLength="12.80" lengthAdjust="spacingAndGlyphs" stroke="#3a3a3a" stroke-width="0.25">Paste</text>
<text x="85.50" y="194.30" font-size="5.2" fill="#666" textLength="13.00" lengthAdjust="spacingAndGlyphs">NAME</text>
<text x="227.50" y="194.30" font-size="5.2" fill="#666" textLength="26.50" lengthAdjust="spacingAndGlyphs">START DATE</text>
<text x="266.00" y="194.30" font-size="5.2" fill="#666" textLength="21.60" lengthAdjust="spacingAndGlyphs">DUE DATE</text>
<text x="298.00" y="194.30" font-size="5.2" fill="#666" textLength="27.00" lengthAdjust="spacingAndGlyphs">MAXIMUM ...</text>
<text x="344.01" y="194.30" font-size="5.2" fill="#666" textLength="24.00" lengthAdjust="spacingAndGlyphs">MARCH, 20</text>
<text x="396.73" y="194.30" font-size="5.2" fill="#666" textLength="21.00" lengthAdjust="spacingAndGlyphs">APRIL, 20</text>
<text x="449.70" y="194.30" font-size="5.2" fill="#666" textLength="17.50" lengthAdjust="spacingAndGlyphs">MAY, 20</text>
<text x="499.67" y="194.30" font-size="5.2" fill="#666" textLength="20.00" lengthAdjust="spacingAndGlyphs">JUNE, 20</text>
<text x="551.39" y="194.30" font-size="5.2" fill="#666" textLength="19.00" lengthAdjust="spacingAndGlyphs">JULY, 20</text>
<text x="598.86" y="194.30" font-size="5.2" fill="#666" textLength="26.50" lengthAdjust="spacingAndGlyphs">AUGUST, 20</text>
<text x="646.58" y="194.30" font-size="5.2" fill="#666" textLength="33.50" lengthAdjust="spacingAndGlyphs">SEPTEMBER, 20</text>
<text x="700.05" y="194.30" font-size="5.2" fill="#666" textLength="29.00" lengthAdjust="spacingAndGlyphs">OCTOBER, 20</text>
<text x="749.52" y="194.30" font-size="5.2" fill="#666" textLength="32.50" lengthAdjust="spacingAndGlyphs">NOVEMBER, 20</text>
<text x="800.99" y="194.30" font-size="5.2" fill="#666" textLength="32.00" lengthAdjust="spacingAndGlyphs">DECEMBER, 20</text>
<text x="104.50" y="209.40" font-size="6.6" fill="#127c86" textLength="29.50" lengthAdjust="spacingAndGlyphs" font-weight="bold">Team Pool</text>
<text x="307.50" y="210.00" font-size="6.7" fill="#444" textLength="11.10" stroke="#444" stroke-width="0.15">100</text>
<text x="112.50" y="235.40" font-size="6.6" fill="#2e939c" textLength="49.20" lengthAdjust="spacingAndGlyphs">Business Analysts</text>
<text x="307.50" y="236.00" font-size="6.7" fill="#6b6b6b" textLength="11.10">100</text>
<text x="112.50" y="261.40" font-size="6.6" fill="#2e939c" textLength="56.20" lengthAdjust="spacingAndGlyphs">Enterprise Architects</text>
<text x="307.50" y="262.00" font-size="6.7" fill="#6b6b6b" textLength="11.10">100</text>
<text x="112.50" y="287.40" font-size="6.6" fill="#2e939c" textLength="50.80" lengthAdjust="spacingAndGlyphs">Solution Architects</text>
<text x="307.50" y="288.00" font-size="6.7" fill="#6b6b6b" textLength="11.10">100</text>
<text x="350.47" y="212.00" font-size="6.7" fill="#444" textLength="11.88" stroke="#444" stroke-width="0.12">154</text>
<text x="350.72" y="221.00" font-size="6.7" fill="#f2681a" textLength="11.38" stroke="#f2681a" stroke-width="0.1">112</text>
<text x="401.69" y="212.00" font-size="6.7" fill="#444" textLength="11.88" stroke="#444" stroke-width="0.12">154</text>
<text x="403.73" y="221.00" font-size="6.7" fill="#8a8a8a" textLength="7.80">95</text>
<text x="452.91" y="212.00" font-size="6.7" fill="#444" textLength="11.88" stroke="#444" stroke-width="0.12">147</text>
<text x="452.91" y="221.00" font-size="6.7" fill="#f2681a" textLength="11.88" stroke="#f2681a" stroke-width="0.1">124</text>
<text x="504.13" y="212.00" font-size="6.7" fill="#444" textLength="11.88" stroke="#444" stroke-width="0.12">154</text>
<text x="504.13" y="221.00" font-size="6.7" fill="#8a8a8a" textLength="11.88">106</text>
<text x="555.35" y="212.00" font-size="6.7" fill="#444" textLength="11.88" stroke="#444" stroke-width="0.12">161</text>
<text x="557.39" y="221.00" font-size="6.7" fill="#8a8a8a" textLength="7.80">40</text>
<text x="606.57" y="212.00" font-size="6.7" fill="#444" textLength="11.88" stroke="#444" stroke-width="0.12">147</text>
<text x="608.61" y="221.00" font-size="6.7" fill="#8a8a8a" textLength="7.80">20</text>
<text x="657.79" y="212.00" font-size="6.7" fill="#444" textLength="11.88" stroke="#444" stroke-width="0.12">154</text>
<text x="709.01" y="212.00" font-size="6.7" fill="#444" textLength="11.88" stroke="#444" stroke-width="0.12">154</text>
<text x="760.23" y="212.00" font-size="6.7" fill="#444" textLength="11.88" stroke="#444" stroke-width="0.12">147</text>
<text x="811.45" y="212.00" font-size="6.7" fill="#444" textLength="11.88" stroke="#444" stroke-width="0.12">161</text>
<text x="352.51" y="238.00" font-size="6.7" fill="rgba(255,255,255,.92)" textLength="7.80">66</text>
<text x="352.51" y="247.00" font-size="6.7" fill="rgba(255,255,255,.92)" textLength="7.80">30</text>
<text x="403.73" y="238.00" font-size="6.7" fill="rgba(255,255,255,.92)" textLength="7.80">66</text>
<text x="403.73" y="247.00" font-size="6.7" fill="rgba(255,255,255,.92)" textLength="7.80">40</text>
<text x="454.95" y="238.00" font-size="6.7" fill="rgba(255,255,255,.92)" textLength="7.80">63</text>
<text x="454.95" y="247.00" font-size="6.7" fill="rgba(255,255,255,.92)" textLength="7.80">40</text>
<text x="506.17" y="238.00" font-size="6.7" fill="rgba(255,255,255,.92)" textLength="7.80">66</text>
<text x="506.17" y="247.00" font-size="6.7" fill="rgba(255,255,255,.92)" textLength="7.80">66</text>
<text x="557.39" y="238.00" font-size="6.7" fill="rgba(255,255,255,.92)" textLength="7.80">69</text>
<text x="557.39" y="247.00" font-size="6.7" fill="rgba(255,255,255,.92)" textLength="7.80">20</text>
<text x="608.61" y="238.00" font-size="6.7" fill="rgba(255,255,255,.92)" textLength="7.80">63</text>
<text x="659.83" y="238.00" font-size="6.7" fill="rgba(255,255,255,.92)" textLength="7.80">66</text>
<text x="711.05" y="238.00" font-size="6.7" fill="rgba(255,255,255,.92)" textLength="7.80">66</text>
<text x="762.27" y="238.00" font-size="6.7" fill="rgba(255,255,255,.92)" textLength="7.80">63</text>
<text x="813.49" y="238.00" font-size="6.7" fill="rgba(255,255,255,.92)" textLength="7.80">69</text>
<text x="352.51" y="264.00" font-size="6.7" fill="rgba(255,255,255,.92)" textLength="7.80">44</text>
<text x="352.51" y="273.00" font-size="6.7" fill="rgba(255,255,255,.92)" textLength="7.80">40</text>
<text x="403.73" y="264.00" font-size="6.7" fill="rgba(255,255,255,.92)" textLength="7.80">44</text>
<text x="403.73" y="273.00" font-size="6.7" fill="rgba(255,255,255,.92)" textLength="7.80">40</text>
<text x="454.95" y="264.00" font-size="6.7" fill="rgba(255,255,255,.92)" textLength="7.80">42</text>
<text x="454.95" y="273.00" font-size="6.7" fill="rgba(255,255,255,.92)" textLength="7.80">40</text>
<text x="506.17" y="264.00" font-size="6.7" fill="rgba(255,255,255,.92)" textLength="7.80">44</text>
<text x="506.17" y="273.00" font-size="6.7" fill="rgba(255,255,255,.92)" textLength="7.80">30</text>
<text x="557.39" y="264.00" font-size="6.7" fill="rgba(255,255,255,.92)" textLength="7.80">46</text>
<text x="557.39" y="273.00" font-size="6.7" fill="rgba(255,255,255,.92)" textLength="7.80">10</text>
<text x="608.61" y="264.00" font-size="6.7" fill="rgba(255,255,255,.92)" textLength="7.80">42</text>
<text x="608.61" y="273.00" font-size="6.7" fill="rgba(255,255,255,.92)" textLength="7.80">10</text>
<text x="659.83" y="264.00" font-size="6.7" fill="rgba(255,255,255,.92)" textLength="7.80">44</text>
<text x="711.05" y="264.00" font-size="6.7" fill="rgba(255,255,255,.92)" textLength="7.80">44</text>
<text x="762.27" y="264.00" font-size="6.7" fill="rgba(255,255,255,.92)" textLength="7.80">42</text>
<text x="813.49" y="264.00" font-size="6.7" fill="rgba(255,255,255,.92)" textLength="7.80">46</text>
<text x="352.51" y="290.00" font-size="6.7" fill="rgba(255,255,255,.92)" textLength="7.80">44</text>
<text x="352.51" y="299.00" font-size="6.7" fill="rgba(255,255,255,.92)" textLength="7.80">42</text>
<text x="403.73" y="290.00" font-size="6.7" fill="rgba(255,255,255,.92)" textLength="7.80">44</text>
<text x="403.73" y="299.00" font-size="6.7" fill="rgba(255,255,255,.92)" textLength="7.80">15</text>
<text x="454.95" y="290.00" font-size="6.7" fill="rgba(255,255,255,.92)" textLength="7.80">42</text>
<text x="454.95" y="299.00" font-size="6.7" fill="rgba(255,255,255,.92)" textLength="7.80">44</text>
<text x="506.17" y="290.00" font-size="6.7" fill="rgba(255,255,255,.92)" textLength="7.80">44</text>
<text x="506.17" y="299.00" font-size="6.7" fill="rgba(255,255,255,.92)" textLength="7.80">10</text>
<text x="557.39" y="290.00" font-size="6.7" fill="rgba(255,255,255,.92)" textLength="7.80">46</text>
<text x="557.39" y="299.00" font-size="6.7" fill="rgba(255,255,255,.92)" textLength="7.80">10</text>
<text x="608.61" y="290.00" font-size="6.7" fill="rgba(255,255,255,.92)" textLength="7.80">42</text>
<text x="608.61" y="299.00" font-size="6.7" fill="rgba(255,255,255,.92)" textLength="7.80">10</text>
<text x="659.83" y="290.00" font-size="6.7" fill="rgba(255,255,255,.92)" textLength="7.80">44</text>
<text x="711.05" y="290.00" font-size="6.7" fill="rgba(255,255,255,.92)" textLength="7.80">44</text>
<text x="762.27" y="290.00" font-size="6.7" fill="rgba(255,255,255,.92)" textLength="7.80">42</text>
<text x="813.49" y="290.00" font-size="6.7" fill="rgba(255,255,255,.92)" textLength="7.80">46</text>
</svg>
</body></html>
